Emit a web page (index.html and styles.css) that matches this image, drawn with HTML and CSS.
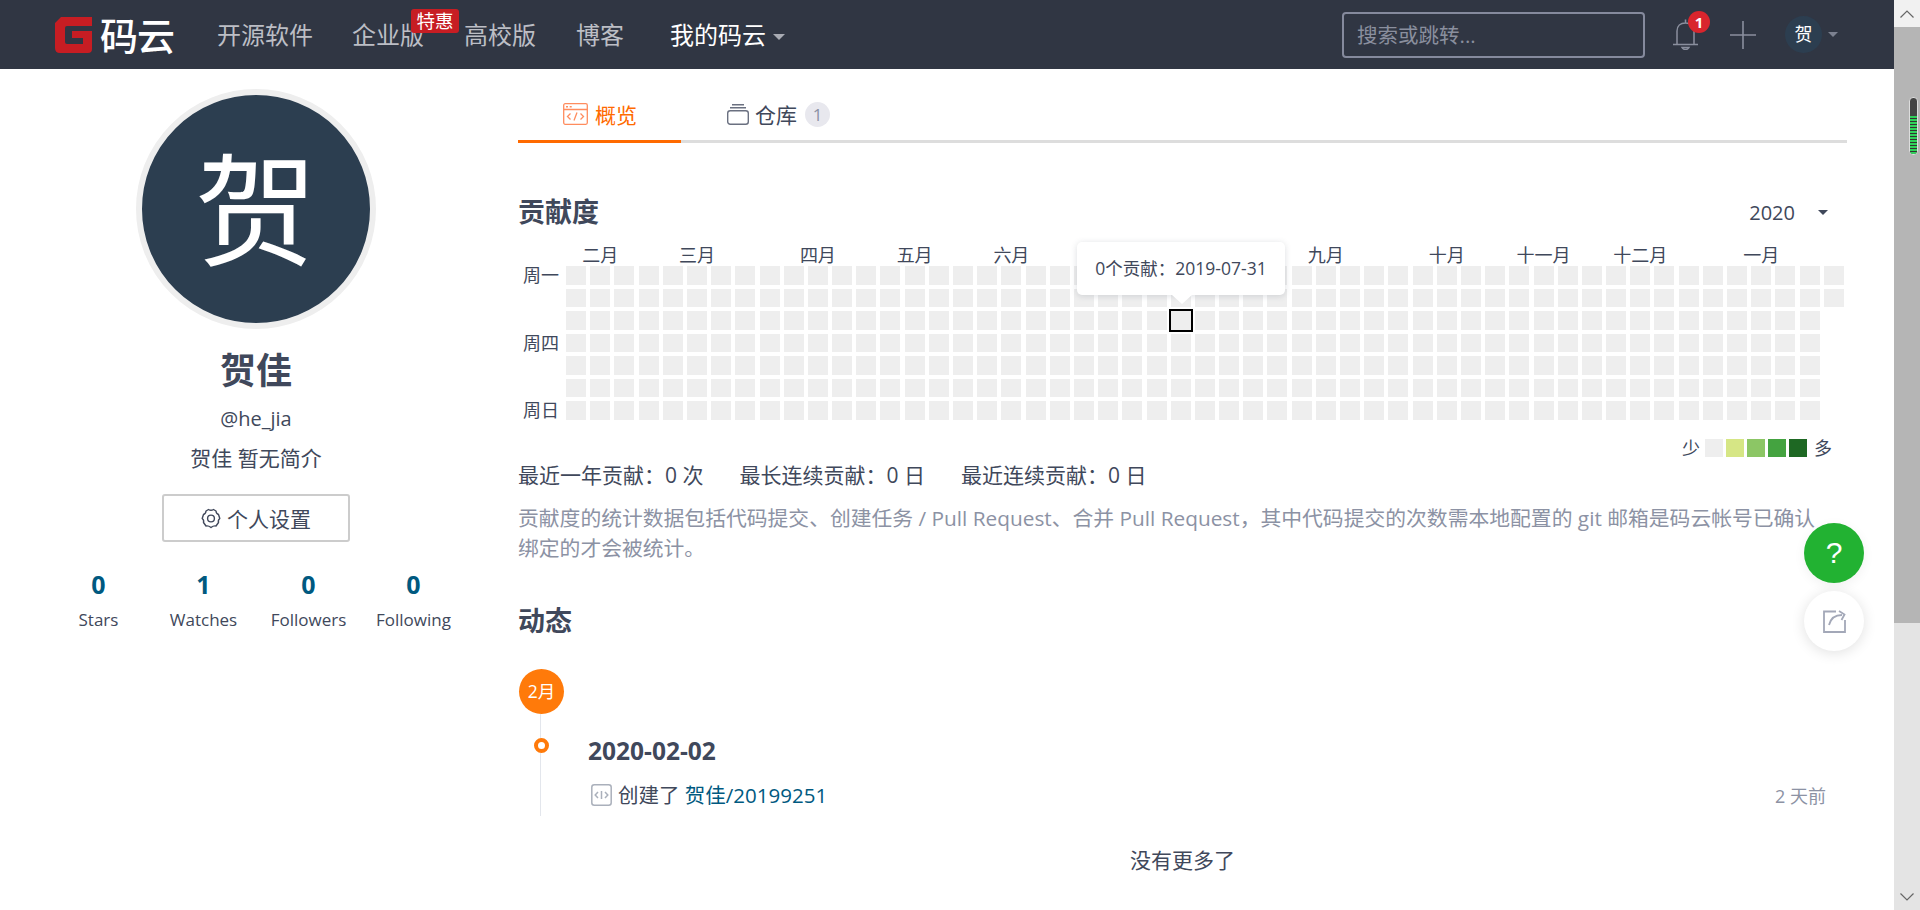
FILE: index.html
```html
<!DOCTYPE html>
<html lang="zh-CN">
<head>
<meta charset="utf-8">
<title>贺佳 - 码云</title>
<link rel="stylesheet" href="styles.css">
</head>
<body>
<div class="window">
  <div class="page">
    <header class="topbar">
      <a class="logo">
        <svg class="logo-g" viewBox="0 0 37 36" width="37" height="36"><path fill="#c71d23" d="M6 0H37V9H12Q10 9 10 11V25Q10 27 12 27H28V21H17V14H37V32Q37 36 33 36H5Q0 36 0 31V6Z"/></svg>
        <span class="logo-text">码云</span>
      </a>
      <nav class="nav">
        <a class="nav-item">开源软件</a>
        <a class="nav-item nav-badged">企业版<span class="nav-badge">特惠</span></a>
        <a class="nav-item">高校版</a>
        <a class="nav-item">博客</a>
        <a class="nav-item nav-mine">我的码云<i class="caret caret-nav"></i></a>
      </nav>
      <div class="top-tools">
        <div class="search">搜索或跳转...</div>
        <div class="bell">
          <svg viewBox="0 0 25 31" width="25" height="31" fill="none" stroke="#8a8f9e" stroke-width="1.5"><path d="M12.5 0.5V4M4 25V12C4 7 7.5 4 12.5 4S21 7 21 12V25M0 25.5H25"/><path d="M9 28.5H16Q15 30.5 12.5 30.5T9 28.5Z"/></svg>
          <span class="bell-count">1</span>
        </div>
        <svg class="plus" viewBox="0 0 26 28" width="26" height="28" fill="none" stroke="#8a8f9e" stroke-width="1.6"><path d="M13 0V28M0 14H26"/></svg>
        <div class="me">贺</div>
        <i class="caret caret-me"></i>
      </div>
    </header>

    <div class="content">
      <aside class="profile">
        <div class="avatar">贺</div>
        <h1 class="name">贺佳</h1>
        <div class="handle">@he_jia</div>
        <div class="bio">贺佳 暂无简介</div>
        <a class="settings">
          <svg viewBox="0 0 20 21" width="20" height="21" fill="none" stroke="#40485b" stroke-width="1.4" stroke-linejoin="round"><path d="M7.5 1.5Q10 3 12.5 1.5L15 3Q15 5.500 17.500 6.500L18.800 10.500Q16.800 12 17.500 14.500L15 18Q12.500 17.500 10 19.500Q7.500 17.500 5 18L2.500 14.500Q3.200 12 1.200 10.500L2.500 6.500Q5 5.500 5 3Z"/><circle cx="10" cy="10.500" r="3.400"/></svg>
          个人设置
        </a>
        <ul class="counts">
          <li class="count"><b>0</b><span>Stars</span></li>
          <li class="count"><b>1</b><span>Watches</span></li>
          <li class="count"><b>0</b><span>Followers</span></li>
          <li class="count"><b>0</b><span>Following</span></li>
        </ul>
      </aside>

      <main class="main">
        <div class="tabs">
          <a class="tab tab-active">
            <svg viewBox="0 0 25 22" width="25" height="22" fill="none" stroke="#ff8c5e" stroke-width="1.3"><rect x="0.700" y="0.700" width="23.600" height="20.600" rx="1.500"/><path d="M1 6.500H24M7.500 10.500L4.500 13.500L7.500 16.500M17.500 10.500L20.500 13.500L17.500 16.500M14 9.500L11 17.500"/><path stroke-width="1.600" stroke-dasharray="2 1.700" d="M3 3.700H10"/></svg>
            概览
          </a>
          <a class="tab tab-repo">
            <svg viewBox="0 0 22 21" width="22" height="21" fill="none" stroke="#6a7080" stroke-width="1.400"><rect x="0.700" y="6.700" width="20.600" height="13.600" rx="2.500"/><path d="M3 3.700H19M5 0.700H17"/></svg>
            仓库
            <span class="tab-count">1</span>
          </a>
        </div>

        <section class="contrib">
          <div class="section-head">
            <h2 class="section-title">贡献度</h2>
            <div class="year">2020<i class="caret caret-year"></i></div>
          </div>
          <div class="months">
            <span class="month m0">二月</span>
            <span class="month m4">三月</span>
            <span class="month m9">四月</span>
            <span class="month m13">五月</span>
            <span class="month m17">六月</span>
            <span class="month m30">九月</span>
            <span class="month m35">十月</span>
            <span class="month m39">十一月</span>
            <span class="month m43">十二月</span>
            <span class="month m48">一月</span>
          </div>
          <div class="heat">
            <div class="days">
              <span class="day d0">周一</span>
              <span class="day d3">周四</span>
              <span class="day d6">周日</span>
            </div>
            <div class="cells" id="cells">
              <div class="tip">0个贡献：2019-07-31</div>
            </div>
          </div>
          <div class="legend">
            <span class="legend-word">少</span>
            <i class="swatch s0"></i><i class="swatch s1"></i><i class="swatch s2"></i><i class="swatch s3"></i><i class="swatch s4"></i>
            <span class="legend-word legend-more">多</span>
          </div>
          <div class="summary">
            <span>最近一年贡献：0 次</span>
            <span>最长连续贡献：0 日</span>
            <span>最近连续贡献：0 日</span>
          </div>
          <p class="note">贡献度的统计数据包括代码提交、创建任务 / Pull Request、合并 Pull Request，其中代码提交的次数需本地配置的 git 邮箱是码云帐号已确认<br>绑定的才会被统计。</p>
        </section>

        <section class="activity">
          <h2 class="section-title">动态</h2>
          <div class="timeline">
            <div class="month-dot">2月</div>
            <div class="event">
              <i class="event-dot"></i>
              <div class="event-date">2020-02-02</div>
              <div class="event-row">
                <svg viewBox="0 0 21 22" width="21" height="22" fill="none" stroke="#aab0bb" stroke-width="1.500"><rect x="0.800" y="0.800" width="19.400" height="20.400" rx="2.500"/><path d="M7 8L4.200 11L7 14M14 8L16.800 11L14 14M10.500 7V15"/></svg>
                <span class="event-text">创建了 <a class="event-link">贺佳/20199251</a></span>
                <span class="event-time">2 天前</span>
              </div>
            </div>
          </div>
          <div class="no-more">没有更多了</div>
        </section>
      </main>
    </div>

    <a class="float float-help">?</a>
    <a class="float float-share">
      <svg viewBox="0 0 23 23" width="23" height="23" fill="none" stroke="#a3a8b8" stroke-width="1.800"><path d="M13 1.500H1V22H22V10"/><path d="M6 15C7.500 9 12 5 19 5M16 1L21.500 4.500L18.500 10"/></svg>
    </a>
  </div>

  <div class="scrollbar">
    <div class="sb-btn"><svg viewBox="0 0 14 8" width="14" height="8" fill="none" stroke="#666" stroke-width="1.200"><path d="M0.500 7.500L7 1L13.500 7.500"/></svg></div>
    <div class="sb-thumb"><div class="sb-meter"><i class="sb-fill"></i></div></div>
    <div class="sb-track"></div>
    <div class="sb-btn"><svg viewBox="0 0 14 8" width="14" height="8" fill="none" stroke="#666" stroke-width="1.200"><path d="M0.500 0.500L7 7L13.500 0.500"/></svg></div>
  </div>
</div>
<script src="heat.js"></script>
</body>
</html>
```
FILE: styles.css
```css
* { box-sizing: border-box; }
html, body { margin: 0; height: 100%; overflow: hidden; }
body {
  font-family: "Open Sans", "Noto Sans CJK SC", sans-serif;
  color: #40485b;
  background: #fff;
  font-size: 20px;
}
a { color: inherit; text-decoration: none; }
h1, h2, p, ul { margin: 0; padding: 0; }
i { display: block; }

.window { display: flex; height: 910px; }
.page { flex: 1; position: relative; min-width: 0; }

/* top bar */
.topbar {
  display: flex; align-items: center;
  height: 69px; padding: 0 56px 0 55px;
  background: #303643;
}
.logo { display: flex; align-items: center; width: 119px; flex: none; }
.logo-g { flex: none; margin-right: 8px; }
.logo-text { color: #fff; font-size: 38px; font-weight: 500; line-height: 36px; letter-spacing: -1px; white-space: nowrap; }
.nav { display: flex; gap: 40px; margin-left: 43px; }
.nav-item { position: relative; color: #bcbec5; font-size: 24px; line-height: 34px; white-space: nowrap; }
.nav-badged { margin-left: -1px; }
.nav-mine { display: flex; align-items: center; color: #fff; margin-left: 6px; }
.nav-badge {
  position: absolute; left: 59px; top: -9px;
  width: 48px; height: 24px; border-radius: 3px;
  background: #c71d23; color: #fff;
  font-size: 18.500px; line-height: 24px; text-align: center;
}
.caret { width: 0; height: 0; border-style: solid; border-color: transparent; border-bottom-width: 0; }
.caret-nav { border-width: 6px 6px 0; border-top-color: #a8abb3; margin: 4px 0 0 7px; }
.top-tools { display: flex; align-items: center; margin-left: auto; }
.search {
  width: 303px; height: 46px; padding-left: 13px;
  border: 2px solid #858a9d; border-radius: 4px;
  color: #8a8f9e; font-size: 20.500px; line-height: 42px;
}
.bell { position: relative; width: 25px; height: 31px; margin-left: 28px; }
.bell svg { display: block; }
.bell-count {
  position: absolute; left: 15px; top: -8px;
  width: 22px; height: 22px; border-radius: 50%;
  background: #d9252d; color: #fff;
  font-size: 15px; font-weight: 700; line-height: 22px; text-align: center;
}
.plus { flex: none; margin-left: 32px; }
.me {
  width: 37px; height: 37px; border-radius: 50%; margin-left: 29px;
  background: #2c3e50; color: #fff; font-size: 18px; line-height: 37px; text-align: center;
}
.caret-me { border-width: 5px 5px 0; border-top-color: #7c8190; margin-left: 6px; }

/* layout */
.content { display: flex; }
.profile {
  flex: none; width: 518px; padding: 20px 6px 0 0;
  display: flex; flex-direction: column; align-items: center;
}
.avatar {
  width: 240px; height: 240px; border-radius: 50%;
  border: 6px solid #eee; background: #2c3e50; color: #fff;
  font-size: 122px; line-height: 228px; text-align: center;
}
.name { margin-top: 15px; font-size: 36px; font-weight: 700; line-height: 54px; }
.handle { margin-top: 6px; font-size: 20px; line-height: 30px; }
.bio { margin-top: 9px; font-size: 21px; line-height: 30px; }
.settings {
  display: flex; align-items: center; justify-content: center; gap: 6px;
  width: 188px; height: 48px; margin-top: 21px;
  border: 2px solid #ccc; border-radius: 3px; font-size: 21px;
}
.counts { display: flex; width: 420px; margin-top: 24px; list-style: none; }
.count { flex: 1; display: flex; flex-direction: column; align-items: center; }
.count b { color: #005980; font-size: 25px; line-height: 36px; }
.count span { margin-top: 4px; font-size: 17px; line-height: 28px; white-space: nowrap; }

.main { flex: none; width: 1329px; }
.tabs { display: flex; height: 74px; border-bottom: 3px solid #ddd; }
.tab {
  display: flex; align-items: center; gap: 7px;
  height: 74px; padding: 19px 0 3px 45px; font-size: 21px; color: #40485b; white-space: nowrap;
}
.tab-active { width: 163px; color: #ff6a00; border-bottom: 3px solid #ff6a00; padding-bottom: 0; }
.tab-repo { padding-left: 46px; gap: 6px; }
.tab-count {
  width: 25px; height: 25px; margin-left: 2px; border-radius: 50%;
  background: #e8e8ee; color: #8c92a4; font-size: 17px; line-height: 25px; text-align: center;
}

.contrib { padding-top: 50px; }
.section-head { display: flex; align-items: center; justify-content: space-between; height: 38px; padding-right: 19px; }
.section-title { font-size: 27px; font-weight: 700; line-height: 38px; }
.year { display: flex; align-items: center; font-size: 20px; }
.caret-year { border-width: 5.500px 5.500px 0; border-top-color: #40485b; margin-left: 23px; }

.months {
  display: grid; grid-template-columns: repeat(53, 20px); column-gap: 4.200px;
  margin: 12px 0 0 48px; height: 24px;
}
.month { grid-row: 1; grid-column-end: span 3; font-size: 18px; line-height: 24px; text-align: center; white-space: nowrap; }
.m0 { grid-column-start: 1; } .m4 { grid-column-start: 5; } .m9 { grid-column-start: 10; }
.m13 { grid-column-start: 14; } .m17 { grid-column-start: 18; }
.m30 { grid-column-start: 31; } .m35 { grid-column-start: 36; }
.m39 { grid-column-start: 40; } .m43 { grid-column-start: 44; } .m48 { grid-column-start: 49; }

.heat { display: flex; margin-top: -1px; }
.days {
  flex: none; width: 48px; padding-left: 5px;
  display: grid; grid-template-rows: repeat(7, 18.500px); row-gap: 4px;
}
.day { font-size: 18px; line-height: 19px; white-space: nowrap; }
.d0 { grid-row: 1; } .d3 { grid-row: 4; } .d6 { grid-row: 7; }
.cells {
  position: relative;
  display: grid; grid-auto-flow: column;
  grid-template-columns: repeat(53, 20px); column-gap: 4.200px;
  grid-template-rows: repeat(7, 18.500px); row-gap: 4px;
}
.cell { background: #eee; }
.cell-focus { outline: 2px solid #000; outline-offset: 0; }
.tip {
  position: absolute; left: 511px; top: -24px; z-index: 2;
  width: 208px; height: 53px; border-radius: 5px;
  background: #fff; box-shadow: 0 1px 6px rgba(60, 70, 90, .18);
  font-size: 17.500px; line-height: 53px; text-align: center; white-space: nowrap;
}
.tip::after {
  content: ""; position: absolute; left: 95px; bottom: -9px;
  border-style: solid; border-width: 9px 10px 0; border-color: #fff transparent transparent;
}

.legend { display: flex; align-items: center; justify-content: flex-end; gap: 3px; height: 18px; margin-top: 19.500px; padding-right: 15px; }
.legend-word { font-size: 18px; line-height: 18px; margin-right: 2px; }
.legend-more { margin: 0 0 0 4px; }
.swatch { width: 18px; height: 18px; }
.s0 { background: #eee; } .s1 { background: #d6e685; } .s2 { background: #8cc665; } .s3 { background: #44a340; } .s4 { background: #1e6823; }

.summary { display: flex; gap: 36px; margin-top: 3px; font-size: 21px; line-height: 30px; white-space: nowrap; }
.note { margin-top: 13px; color: #8c92a4; font-size: 20.800px; line-height: 30px; white-space: nowrap; }

.activity { position: relative; margin-top: 39px; }
.timeline { margin-top: 29px; position: relative; }
.month-dot {
  position: relative; width: 45px; height: 45px; margin-left: 1px; border-radius: 50%;
  background: #ff7a0a; color: #fff; font-size: 17.500px; line-height: 45px; text-align: center;
}
.event { position: relative; height: 102px; margin-left: 22px; padding: 20px 21px 0 47px; border-left: 1px solid #e3e6ec; }
.event-dot {
  position: absolute; left: -7px; top: 24px;
  width: 15px; height: 15px; border-radius: 50%;
  border: 4px solid #ff7a0a; background: #fff;
}
.event-date { font-size: 24.500px; font-weight: 700; line-height: 34px; }
.event-row { display: flex; align-items: center; gap: 6px; margin-top: 15px; height: 24px; }
.event-row svg { flex: none; margin-left: 3px; }
.event-text { font-size: 20.500px; line-height: 24px; }
.event-link { color: #005980; }
.event-time { margin-left: auto; color: #8c92a4; font-size: 18px; }
.no-more { margin-top: 29px; font-size: 21px; line-height: 30px; text-align: center; }

/* floating buttons */
.float {
  position: absolute; left: 1804px;
  width: 60px; height: 60px; border-radius: 50%;
  display: flex; align-items: center; justify-content: center;
}
.float-help { top: 523px; background: #22b232; color: #fff; font-size: 30px; font-family: "Liberation Sans", sans-serif; box-shadow: 0 3px 12px rgba(0,0,0,.06); }
.float-share { top: 591px; background: #fff; box-shadow: 0 2px 14px rgba(0,0,0,.12); }

/* browser scrollbar */
.scrollbar { flex: none; width: 26px; display: flex; flex-direction: column; }
.sb-btn { flex: none; height: 27px; display: flex; align-items: center; justify-content: center; background: #f1f1f1; }
.scrollbar .sb-btn:last-child { background: #e4e4e4; }
.sb-thumb { flex: none; position: relative; height: 596px; background: #b5b5b5; }
.sb-track { flex: 1; background: #e4e4e4; }
.sb-meter {
  position: absolute; left: 15px; top: 70px; width: 9px; height: 58px;
  border-radius: 4px; background: #444; border: 1px solid #ddd; overflow: hidden;
}
.sb-fill {
  position: absolute; left: 0; right: 0; bottom: 0; height: 38px;
  background: repeating-linear-gradient(to bottom, #2fd15a 0 2px, #333 2px 3px);
}
```
FILE: heat.js
```js
var host = document.getElementById('cells');
for (var c = 0; c < 53; c++) {
  for (var r = 0; r < (c === 52 ? 2 : 7); r++) {
    var cell = document.createElement('i');
    cell.className = 'cell' + (c === 25 && r === 2 ? ' cell-focus' : '');
    host.appendChild(cell);
  }
}
```
